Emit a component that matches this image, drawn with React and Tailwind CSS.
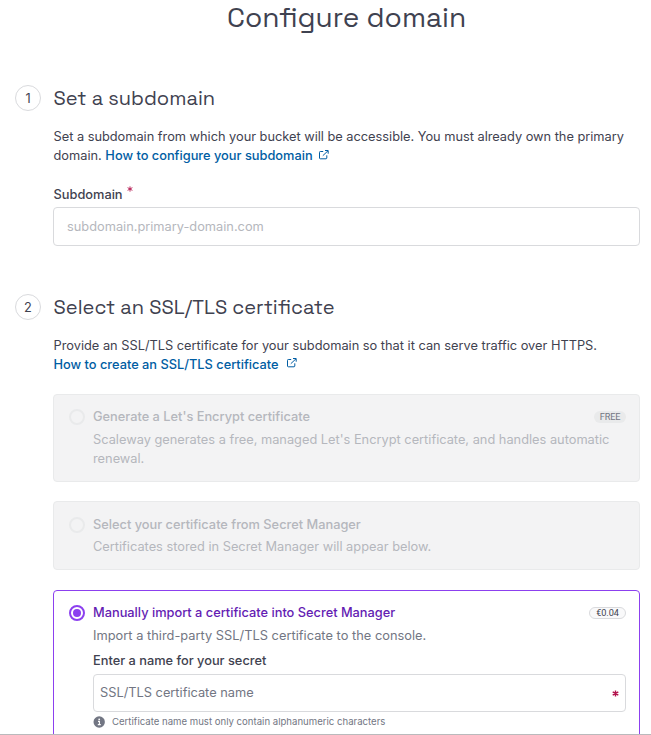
import React from "react";

function ExternalIcon({ className = "" }) {
  return (
    <svg viewBox="0 0 10 10" className={`inline-block h-[10px] w-[10px] ${className}`} fill="none" stroke="currentColor" strokeWidth="1">
      <path d="M4.2 1.5H1.3a.8.8 0 0 0-.8.8v5.7c0 .5.3.8.8.8H7c.5 0 .8-.3.8-.8V5.3" />
      <path d="M3.8 5.7 9 .8M6 .5h3.2v3.2" />
    </svg>
  );
}

function Step({ number, title, children }) {
  return (
    <section className="flex gap-3">
      <div className="flex h-[26px] w-[26px] shrink-0 items-center justify-center rounded-full border border-[#d9dadd] text-[12.8px] text-[#3f4250]">
        {number}
      </div>
      <div className="w-[587px] shrink-0">
        <h2 className="h-[26px] whitespace-nowrap pl-[0.6px] font-['Space_Grotesk','Inter',sans-serif] text-[20px] leading-[26px] text-[#3f4250]">
          {title}
        </h2>
        {children}
      </div>
    </section>
  );
}

function DisabledOption({ className, title, badge, children }) {
  return (
    <div className={`flex rounded-[4px] border border-[#e9eaeb] bg-[#f3f3f4] pl-[15px] pr-[13px] ${className}`}>
      <span className="-ml-[0.5px] mr-[0.5px] mt-[1.5px] h-4 w-4 shrink-0 rounded-full border-2 border-[#e9eaeb]" />
      <div className="min-w-0 flex-1 pl-2">
        <div className="flex h-[19px] items-center justify-between">
          <span className="whitespace-nowrap font-medium text-[#b5b7bd]">{title}</span>
          {badge}
        </div>
        {children}
      </div>
    </div>
  );
}

export default function App() {
  return (
    <main className="flex h-[735px] w-[651px] flex-col overflow-hidden border-b border-[#b9babc] bg-white font-['Inter','Liberation_Sans',sans-serif] text-[12.8px] leading-[19px] text-[#3f4250]">
      <h1 className="h-[35px] shrink-0 whitespace-nowrap pl-[227px] font-['Space_Grotesk','Inter',sans-serif] text-[28px] leading-[35px]">
        Configure domain
      </h1>

      <div className="flex shrink-0 flex-col gap-12 pl-[15px] pt-[50px]">
        <Step number="1" title="Set a subdomain">
          <div className="mt-4 whitespace-nowrap pl-[0.5px]">
            <p className="tracking-[-0.015px]">Set a subdomain from which your bucket will be accessible. You must already own the primary</p>
            <p>
              domain. <a className="font-medium text-[#005da3]">How to configure your subdomain</a>
              <ExternalIcon className="ml-[6px] -mt-1 text-[#005da3]" />
            </p>
          </div>
          <label className="mt-5 flex h-[22px] items-start pl-[0.5px] font-medium">
            <span className="leading-[19px]">Subdomain</span>
            <svg viewBox="0 0 8 8" className="ml-[4px] mt-px h-[6px] w-[6px]" fill="none" stroke="#b3144d" strokeWidth="1.2">
              <path d="M4 .5v7M.8 2.2l6.4 3.6M7.2 2.2.8 5.8" />
            </svg>
          </label>
          <div className="flex h-[39px] items-center rounded-[4px] border border-[#d9dadd] pl-[13px] text-[#b5b7bd]">
            subdomain.primary-domain.com
          </div>
        </Step>

        <Step number="2" title="Select an SSL/TLS certificate">
          <div className="mt-4 whitespace-nowrap pl-[0.5px]">
            <p>Provide an SSL/TLS certificate for your subdomain so that it can serve traffic over HTTPS.</p>
            <p>
              <a className="font-medium text-[#005da3]">How to create an SSL/TLS certificate</a>
              <ExternalIcon className="ml-2 -mt-[5px] text-[#005da3]" />
            </p>
          </div>

          <DisabledOption
            className="mt-5 h-[88px] pt-3"
            title="Generate a Let's Encrypt certificate"
            badge={
              <span className="flex h-3 w-8 items-center justify-center rounded-full bg-[#e9eaeb] font-['Roboto',sans-serif] text-[9.2px] leading-none tracking-[-0.2px] text-[#727683]">FREE</span>
            }
          >
            <p className="mt-1 whitespace-nowrap text-[#b5b7bd]">
              Scaleway generates a free, managed Let's Encrypt certificate, and handles automatic
              <br />
              renewal.
            </p>
          </DisabledOption>

          <DisabledOption className="mt-[19px] h-[69px] pt-[13px]" title="Select your certificate from Secret Manager">
            <p className="mt-[3px] whitespace-nowrap text-[#b5b7bd]">Certificates stored in Secret Manager will appear below.</p>
          </DisabledOption>

          <div className="mt-5 flex h-[180px] rounded-[4px] border border-[#8c40ef] pl-[15px] pr-[13px] pt-3">
            <span className="-ml-[0.5px] mr-[0.5px] mt-[1.5px] flex h-4 w-4 shrink-0 items-center justify-center rounded-full border-2 border-[#8c40ef]">
              <span className="h-2 w-2 rounded-full bg-[#8c40ef]" />
            </span>
            <div className="min-w-0 flex-1 pl-2">
              <div className="flex h-[19px] items-center justify-between">
                <span className="whitespace-nowrap font-medium text-[#641cb3]">Manually import a certificate into Secret Manager</span>
                <span className="flex h-3 w-[37px] items-center justify-center rounded-full border border-[#d9dadd] bg-[#f9f9fa] font-['Roboto',sans-serif] text-[9.2px] leading-none tracking-[-0.1px] text-[#3f4250]">€0.04</span>
              </div>
              <p className="mt-1 tracking-[0.025px] text-[#727683]">Import a third-party SSL/TLS certificate to the console.</p>
              <p className="mt-[6px] font-medium text-[#3f4250]">Enter a name for your secret</p>
              <div className="mt-1 flex h-[38px] items-center justify-between rounded-[4px] border border-[#d9dadd] px-[6px] text-[#727683]">
                <span className="-mt-px pb-px">SSL/TLS certificate name</span>
                <svg viewBox="0 0 8 8" className="h-[7px] w-[7px]" fill="none" stroke="#b3144d" strokeWidth="1.6">
                  <path d="M4 .5v7M.8 2.2l6.4 3.6M7.2 2.2.8 5.8" />
                </svg>
              </div>
              <div className="mt-[3px] flex h-[13px] items-center text-[9.6px] leading-[13px] text-[#727683]">
                <svg viewBox="0 0 12 12" className="mr-[7px] h-[12px] w-[12px]">
                  <circle cx="6.2" cy="6" r="5.7" fill="#727683" />
                  <circle cx="6.2" cy="3.3" r=".9" fill="#fff" />
                  <path d="M5 5.4h1.4v3M4.8 8.6h3" fill="none" stroke="#fff" strokeWidth="1.1" />
                </svg>
                <span className="whitespace-nowrap">Certificate name must only contain alphanumeric characters</span>
              </div>
            </div>
          </div>
        </Step>
      </div>
    </main>
  );
}
